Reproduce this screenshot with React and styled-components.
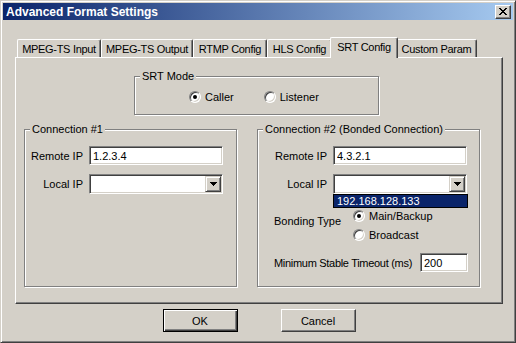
import React from "react";
import styled, { createGlobalStyle, css } from "styled-components";

const Global = createGlobalStyle`
  html, body { margin: 0; padding: 0; background: #D4D0C8; }
  body { font-family: "Liberation Sans", Arial, sans-serif; font-size: 11px; color: #000; }
  *, *::before, *::after { box-sizing: border-box; }
`;

const raisedBox = css`
  border: 1px solid;
  border-color: #fff #404040 #404040 #fff;
  box-shadow: inset -1px -1px #808080;
`;

const sunkenBox = css`
  border: 1px solid;
  border-color: #808080 #fff #fff #808080;
  box-shadow: inset 1px 1px #404040, inset -1px -1px #D4D0C8;
`;

const Window = styled.div`
  width: 516px;
  height: 343px;
  display: flex;
  flex-direction: column;
  background: #D4D0C8;
  border: 1px solid;
  border-color: #D4D0C8 #404040 #404040 #D4D0C8;
  box-shadow: inset 1px 1px #fff, inset -1px -1px #808080;
  padding: 2px;
`;

const TitleBar = styled.div`
  height: 17px;
  display: flex;
  align-items: center;
  justify-content: space-between;
  padding: 0 2px 0 3px;
  background: linear-gradient(to right, #0A246A, #A6CAF0);
  color: #fff;
  font-weight: bold;
  font-size: 12px;
`;

const CloseButton = styled.div`
  width: 16px;
  height: 14px;
  background: #D4D0C8;
  display: flex;
  align-items: center;
  justify-content: center;
  ${raisedBox};
`;

const Body = styled.div`
  flex: 1;
  display: flex;
  flex-direction: column;
  padding: 17px 10px 0 12px;
`;

const TabStrip = styled.div`
  display: flex;
  align-items: flex-end;
  height: 20px;
  padding-left: 2px;
`;

const Tab = styled.div`
  width: ${(p) => p.$w}px;
  height: 18px;
  flex: none;
  display: flex;
  align-items: center;
  justify-content: center;
  white-space: nowrap;
  letter-spacing: -0.3px;
  background: #D4D0C8;
  border-top: 1px solid #fff;
  border-left: 1px solid #fff;
  border-right: 1px solid #404040;
  box-shadow: inset -1px 0 #808080;
  border-radius: 2px 2px 0 0;
  padding-top: 1px;
  ${(p) =>
    p.$active &&
    css`
      height: 21px;
      margin: 0 -2px -1px;
      padding-top: 0;
      padding-bottom: 3px;
      position: relative;
      z-index: 2;
    `}
`;

const Panel = styled.div`
  width: 488px;
  height: 247px;
  display: flex;
  flex-direction: column;
  ${raisedBox};
`;

const Group = styled.fieldset`
  margin: 0;
  padding: 0;
  min-width: 0;
  width: ${(p) => p.$w}px;
  height: ${(p) => p.$h}px;
  border: 1px solid #808080;
  box-shadow: inset 1px 1px #fff, 1px 1px #fff;
  display: flex;
  flex-direction: column;
`;

const Legend = styled.legend`
  margin-left: 5px;
  padding: 0 2px;
  line-height: 13px;
  background: #D4D0C8;
  white-space: nowrap;
`;

const ModeGroup = styled(Group)`
  margin: 12px 0 0 118px;
`;

const RadioRow = styled.div`
  display: flex;
  gap: 30px;
  padding: 7px 0 0 54px;
`;

const Option = styled.label`
  display: flex;
  align-items: center;
  gap: 4px;
  height: ${(p) => p.$h || 13}px;
  white-space: nowrap;
`;

const RadioDot = styled.span`
  width: 12px;
  height: 12px;
  flex: none;
  border-radius: 50%;
  background: #fff;
  border: 1px solid;
  border-color: #808080 #fff #fff #808080;
  box-shadow: inset 1px 1px #404040, inset -1px -1px #D4D0C8;
  display: flex;
  align-items: center;
  justify-content: center;
  &::after {
    content: "";
    width: 4px;
    height: 4px;
    border-radius: 50%;
    background: #000;
    display: ${(p) => (p.$checked ? "block" : "none")};
  }
`;

const ConnRow = styled.div`
  display: flex;
  gap: 20px;
  margin: 8px 0 0 8px;
`;

const FieldGrid = styled.div`
  display: grid;
  grid-template-columns: 52px 134px;
  column-gap: 6px;
  row-gap: 9px;
  align-items: center;
  padding: 10px 0 0 ${(p) => p.$indent}px;
`;

const FieldLabel = styled.span`
  text-align: right;
  white-space: nowrap;
`;

const TextBox = styled.input`
  width: ${(p) => p.$w || 134}px;
  height: 19px;
  margin: 0;
  padding: 0 0 0 3px;
  font: inherit;
  color: #000;
  background: #fff;
  outline: none;
  ${sunkenBox};
`;

const Combo = styled.div`
  position: relative;
  width: 134px;
  height: 20px;
  background: #fff;
  padding: 1px;
  display: flex;
  justify-content: flex-end;
  ${sunkenBox};
`;

const ComboButton = styled.div`
  width: 16px;
  height: 16px;
  background: #D4D0C8;
  display: flex;
  align-items: center;
  justify-content: center;
  border: 1px solid;
  border-color: #D4D0C8 #404040 #404040 #D4D0C8;
  box-shadow: inset 1px 1px #fff, inset -1px -1px #808080;
`;

const DropList = styled.div`
  position: absolute;
  top: calc(100% + 1px);
  left: -1px;
  width: 135px;
  height: 14px;
  z-index: 5;
  border: 1px solid #000;
  background: #0A246A;
  color: #fff;
  line-height: 12px;
  padding-left: 3px;
`;

const ConnBody = styled.div`
  display: flex;
  flex-direction: column;
`;

const BondRow = styled.div`
  display: flex;
  margin-top: 12px;
  padding-left: 16px;
`;

const BondLabel = styled.span`
  width: 79px;
  margin-top: 9px;
  line-height: 13px;
`;

const OptionColumn = styled.div`
  display: flex;
  flex-direction: column;
`;

const TimeoutRow = styled.div`
  display: flex;
  align-items: center;
  margin-top: 9px;
  padding-left: 16px;
`;

const TimeoutLabel = styled.span`
  width: 146px;
  white-space: nowrap;
  letter-spacing: -0.3px;
`;

const ButtonRow = styled.div`
  display: flex;
  justify-content: center;
  gap: 43px;
  margin-top: 5px;
`;

const Button = styled.button`
  width: 75px;
  height: 23px;
  padding: 0;
  margin: 0;
  font: inherit;
  color: #000;
  background: #D4D0C8;
  ${raisedBox};
  ${(p) =>
    p.$default &&
    css`
      border-color: #000;
      box-shadow: inset 1px 1px #fff, inset -1px -1px #404040, inset -2px -2px #808080;
    `}
`;

const ArrowDown = () => (
  <svg width="7" height="4" viewBox="0 0 7 4" shapeRendering="crispEdges">
    <path d="M0 0h7v1H0zM1 1h5v1H1zM2 2h3v1H2zM3 3h1v1H3z" fill="#000" />
  </svg>
);

const CloseGlyph = () => (
  <svg width="8" height="7" viewBox="0 0 8 7" shapeRendering="crispEdges">
    <path
      d="M0 0h2v1H0zM6 0h2v1H6zM1 1h2v1H1zM5 1h2v1H5zM2 2h4v1H2zM3 3h2v1H3zM2 4h4v1H2zM1 5h2v1H1zM5 5h2v1H5zM0 6h2v1H0zM6 6h2v1H6z"
      fill="#000"
    />
  </svg>
);

const Radio = ({ checked, h, children }) => (
  <Option $h={h}>
    <RadioDot $checked={checked} />
    <span>{children}</span>
  </Option>
);

const tabs = [
  { label: "MPEG-TS Input", w: 84 },
  { label: "MPEG-TS Output", w: 92 },
  { label: "RTMP Config", w: 74 },
  { label: "HLS Config", w: 65 },
  { label: "SRT Config", w: 68, active: true },
  { label: "Custom Param", w: 81 },
];

export default function App() {
  return (
    <>
      <Global />
      <Window>
        <TitleBar>
          <span>Advanced Format Settings</span>
          <CloseButton>
            <CloseGlyph />
          </CloseButton>
        </TitleBar>
        <Body>
          <TabStrip>
            {tabs.map((t) => (
              <Tab key={t.label} $w={t.w} $active={t.active}>
                {t.label}
              </Tab>
            ))}
          </TabStrip>
          <Panel>
            <ModeGroup $w={245} $h={45}>
              <Legend>SRT Mode</Legend>
              <RadioRow>
                <Radio checked>Caller</Radio>
                <Radio>Listener</Radio>
              </RadioRow>
            </ModeGroup>
            <ConnRow>
              <Group $w={213} $h={164}>
                <Legend>Connection #1</Legend>
                <FieldGrid $indent={6}>
                  <FieldLabel>Remote IP</FieldLabel>
                  <TextBox readOnly defaultValue="1.2.3.4" />
                  <FieldLabel>Local IP</FieldLabel>
                  <Combo>
                    <ComboButton>
                      <ArrowDown />
                    </ComboButton>
                  </Combo>
                </FieldGrid>
              </Group>
              <Group $w={223} $h={164}>
                <Legend>Connection #2 (Bonded Connection)</Legend>
                <ConnBody>
                  <FieldGrid $indent={17}>
                    <FieldLabel>Remote IP</FieldLabel>
                    <TextBox readOnly defaultValue="4.3.2.1" />
                    <FieldLabel>Local IP</FieldLabel>
                    <Combo>
                      <ComboButton>
                        <ArrowDown />
                      </ComboButton>
                      <DropList>192.168.128.133</DropList>
                    </Combo>
                  </FieldGrid>
                  <BondRow>
                    <BondLabel>Bonding Type</BondLabel>
                    <OptionColumn>
                      <Radio checked h={19}>Main/Backup</Radio>
                      <Radio h={19}>Broadcast</Radio>
                    </OptionColumn>
                  </BondRow>
                  <TimeoutRow>
                    <TimeoutLabel>Minimum Stable Timeout (ms)</TimeoutLabel>
                    <TextBox readOnly defaultValue="200" $w={48} />
                  </TimeoutRow>
                </ConnBody>
              </Group>
            </ConnRow>
          </Panel>
          <ButtonRow>
            <Button $default>OK</Button>
            <Button>Cancel</Button>
          </ButtonRow>
        </Body>
      </Window>
    </>
  );
}
